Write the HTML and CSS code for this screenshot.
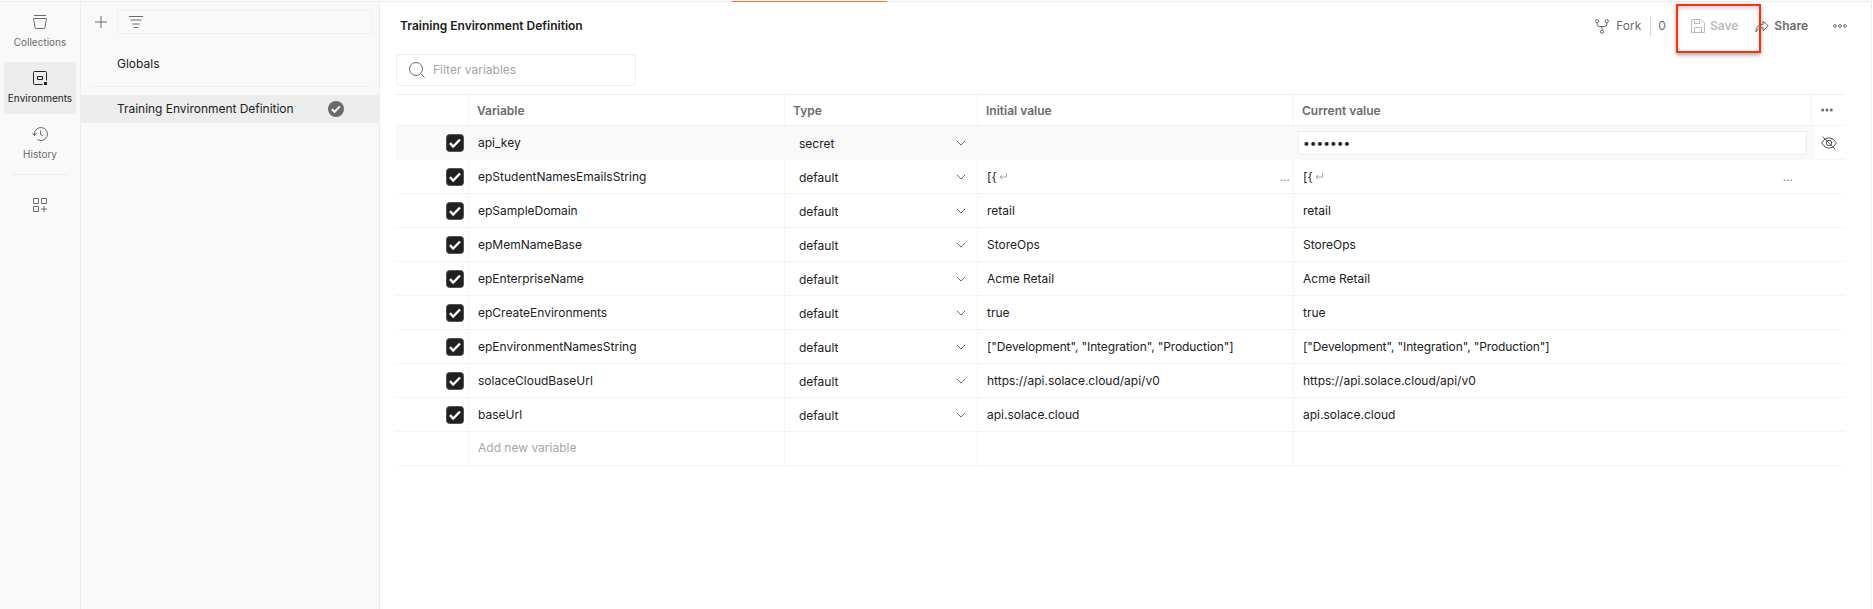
FILE: index.html
```html
<!DOCTYPE html>
<html lang="en">
<head>
<meta charset="utf-8">
<title>Training Environment Definition</title>
<link rel="stylesheet" href="styles.css">
</head>
<body>
<div class="app">
  <nav class="rail">
    <div class="rail-item">
      <svg width="16" height="16" viewBox="0 0 16 16"><path d="M2 1.500h12M1.500 4.500h13l-1.600 9.200q-.1.800-.9.800H4q-.8 0-.9-.8z"/></svg>
      <span>Collections</span>
    </div>
    <div class="rail-item active">
      <svg width="16" height="16" viewBox="0 0 16 16"><path d="M14.500 10.500v-8q0-1-1-1h-11q-1 0-1 1v11q0 1 1 1h8M5.500 6.500h5v3h-5z"/><path class="solid" d="M12 12h3v3h-3z"/></svg>
      <span>Environments</span>
    </div>
    <div class="rail-item">
      <svg width="16" height="16" viewBox="0 0 16 16"><path d="M2.500 9.500V8a6.500 6.500 0 1 1 3 5.500M.5 7.300l2 2.200 2-2.200M8.500 4.500V8.500l2.500 1.500"/></svg>
      <span>History</span>
    </div>
    <hr>
    <svg class="more" width="16" height="16" viewBox="0 0 16 16"><path d="M1.500 1.500h5v5h-5zM9.500 1.500h5v5h-5zM1.500 9.500h5v5h-5zM12 9v6M9 12h6"/></svg>
  </nav>
  <aside class="sidebar">
    <div class="side-tools">
      <svg class="plus" width="12" height="12" viewBox="0 0 12 12"><path d="M6 0v12M0 6h12"/></svg>
      <div class="side-filter"><svg width="14" height="12" viewBox="0 0 14 12"><path d="M0 .500h14M1.500 4h11M3.500 8h7M5 11.500h4"/></svg></div>
    </div>
    <div class="env globals">Globals</div>
    <div class="env selected"><span>Training Environment Definition</span>
      <svg width="16" height="16" viewBox="0 0 16 16"><circle cx="8" cy="8" r="8"/><path d="M4 8.200l2.600 2.600L11.800 5.400"/></svg>
    </div>
  </aside>
  <main class="main">
    <div class="tab-line"></div>
    <header class="head">
      <h1>Training Environment Definition</h1>
      <div class="actions">
        <svg class="i-fork" width="14" height="15" viewBox="0 0 14 15"><circle cx="2.200" cy="2.200" r="1.600"/><circle cx="11.800" cy="2.200" r="1.600"/><circle cx="7" cy="12.800" r="1.600"/><path d="M2.200 3.800v1.700q0 2 2 2h5.600q2 0 2-2V3.800M7 7.500v3.700"/></svg>
        <span class="fork">Fork</span><span class="count">0</span>
        <div class="save"><svg width="14" height="14" viewBox="0 0 14 14"><path d="M.500.500h9.500l3.500 3.500v9.500H.500zM3.500.500v4h5v-4M3.500 13.500v-5h7v5"/></svg><span>Save</span><i class="callout"></i></div>
        <svg class="i-share" width="14" height="13" viewBox="0 0 14 13"><path d="M.8 12Q1 4.500 8 4.500V1.300L13.300 6 8 10.700V7.500Q3 7.500.8 12z"/></svg>
        <span class="share">Share</span>
        <svg class="i-dots" width="14" height="4" viewBox="0 0 14 4"><circle cx="2" cy="2" r="1.400"/><circle cx="7" cy="2" r="1.400"/><circle cx="12" cy="2" r="1.400"/></svg>
      </div>
    </header>
    <div class="search"><svg width="16" height="16" viewBox="0 0 16 16"><circle cx="7" cy="7" r="6.500"/><path d="M11.500 11.500L15.500 15.500"/></svg><span>Filter variables</span></div>
    <div class="table" id="table">
      <div class="row header"><div></div><div>Variable</div><div>Type</div><div>Initial value</div><div>Current value</div><div><svg class="hdots" width="12" height="4" viewBox="0 0 12 4"><circle cx="1.700" cy="2" r="1.500"/><circle cx="6" cy="2" r="1.500"/><circle cx="10.300" cy="2" r="1.500"/></svg></div></div>
    </div>
  </main>
</div>
<script src="app.js"></script>
</body>
</html>
```
FILE: app.js
```js
const list = '["Development", "Integration", "Production"]';
const rows = [
  ['api_key', 'secret', '', '•••••••'],
  ['epStudentNamesEmailsString', 'default', '[{', '[{'],
  ['epSampleDomain', 'default', 'retail', 'retail'],
  ['epMemNameBase', 'default', 'StoreOps', 'StoreOps'],
  ['epEnterpriseName', 'default', 'Acme Retail', 'Acme Retail'],
  ['epCreateEnvironments', 'default', 'true', 'true'],
  ['epEnvironmentNamesString', 'default', list, list],
  ['solaceCloudBaseUrl', 'default', 'https://api.solace.cloud/api/v0', 'https://api.solace.cloud/api/v0'],
  ['baseUrl', 'default', 'api.solace.cloud', 'api.solace.cloud'],
];
const check = '<svg class="check" width="18" height="18" viewBox="0 0 18 18"><rect x=".5" y=".5" width="17" height="17" rx="3"/><path d="M4 9.200l3.200 3.300L14 5.500"/></svg>';
const chevron = '<svg class="chevron" width="10" height="6" viewBox="0 0 10 6"><path d="M.8.800L5 5 9.200.800"/></svg>';
const ret = '<svg class="return" width="8" height="7" viewBox="0 0 8 7"><path d="M7.500 0v4H1M3 2L1 4l2 2"/></svg>';
const eye = '<svg class="eye" width="16" height="14" viewBox="0 0 16 14"><path d="M.6 7Q3.500 1.700 8 1.700T15.400 7Q12.500 12.300 8 12.300T.6 7zM1.500.600l12.600 12.600"/><circle cx="8" cy="7" r="2.700"/></svg>';
const value = (v) => v === '[{'
  ? `<span>[{</span>${ret}<span class="ellipsis">...</span>`
  : `<span${v === list ? ' class="list"' : ''}>${v}</span>`;
const html = rows.map(([name, type, initial, current], i) => i === 0
  ? `<div class="row secret"><div>${check}</div><div>${name}</div><div class="type"><span>${type}</span>${chevron}</div><div></div><div class="masked"><div class="mask-box">${current}</div></div><div class="reveal">${eye}</div></div>`
  : `<div class="row"><div>${check}</div><div>${name}</div><div class="type"><span>${type}</span>${chevron}</div><div>${value(initial)}</div><div>${value(current)}</div><div></div></div>`).join('');
document.getElementById('table').insertAdjacentHTML('beforeend',
  html + '<div class="row add"><div></div><div>Add new variable</div><div></div><div></div><div></div><div></div></div>');
```
FILE: styles.css
```css
* { box-sizing: border-box; }
body { margin: 0; font: 12px/16px Inter, sans-serif; color: #212121; background: #fff; overflow: hidden; }
svg { display: block; flex: none; fill: none; stroke: #6b6b6b; stroke-width: 1; }
.app { display: flex; width: 1873px; height: 609px; border-top: 1px solid #fafafa; }
.rail { width: 81px; border-right: 1px solid #ededed; border-top: 1px solid #ededed; background: #f9f9f9; padding: 4px 4px 0; display: flex; flex-direction: column; align-items: center; }
.rail-item { width: 72px; height: 52px; margin-bottom: 4px; padding-top: 8px; display: flex; flex-direction: column; align-items: center; gap: 4px; border-radius: 4px; font-size: 10px; color: #6b6b6b; white-space: nowrap; }
.rail-item.active { background: #ededed; color: #212121; }
.rail-item.active svg { stroke: #212121; }
.rail-item .solid { fill: #212121; stroke: none; }
.rail hr { width: 56px; height: 1px; border: 0; background: #ededed; margin: 0; }
.more { margin-top: 22px; }
.sidebar { width: 299px; border-right: 1px solid #ededed; border-top: 1px solid #ededed; background: #f9f9f9; }
.side-tools { display: flex; align-items: center; padding: 8px 7px 0 14px; height: 32px; gap: 10px; }
.side-filter { flex: 1; height: 24px; border: 1px solid #f0f0f0; display: flex; align-items: center; padding-left: 11px; }
.globals { margin: 0 7px 0 8px; height: 53px; padding: 22px 0 0 28px; border-bottom: 1px solid #f0f0f0; }
.selected { margin-top: 8px; height: 28px; background: #ededed; padding: 0 35px 0 36px; display: flex; align-items: center; justify-content: space-between; letter-spacing: -.03px; }
.selected circle { fill: #6b6b6b; stroke: none; }
.selected path { stroke: #fff; stroke-width: 2; }
.main { flex: 1; border-top: 1px solid #ededed; border-right: 1px solid #ededed; margin-right: 1px; padding-left: 16px; position: relative; }
.tab-line { position: absolute; left: 352px; top: -1px; width: 155px; height: 1px; background: #ff6c37; }
.head { height: 52px; padding: 16px 24px 0 4px; display: flex; justify-content: space-between; }
h1 { margin: 0; font-size: 12px; line-height: 16px; font-weight: 600; }
.actions { display: flex; align-items: center; height: 16px; color: #6b6b6b; }
.fork { margin-left: 7px; }
.count { margin-left: 9px; border-left: 1px solid #d0d0d0; height: 20px; line-height: 20px; padding-left: 7px; }
.save { position: relative; display: flex; align-items: center; gap: 5px; margin-left: 25px; color: #bcbcbc; font-weight: 600; }
.save svg { stroke: #bcbcbc; }
.callout { position: absolute; left: -15px; top: -14px; width: 85px; height: 49px; border: 2px solid #ff2f0e; box-shadow: 0 2px 4px rgba(0,0,0,.35), inset 0 2px 4px rgba(0,0,0,.2); }
.i-share { margin-left: 17px; }
.share { margin-left: 5px; font-weight: 600; }
.i-dots { margin-left: 25px; }
.search { width: 240px; height: 32px; border: 1px solid #ededed; border-radius: 4px; display: flex; align-items: center; padding-left: 12px; gap: 8px; color: #a6a6a6; }
.table { width: 1448px; margin-top: 8px; border-top: 1px solid #ededed; }
.row { display: grid; grid-template-columns: 73px 316px 193px 316px 517px 33px; height: 34px; }
.row > div { display: flex; align-items: center; border-right: 1px solid #f5f5f5; border-bottom: 1px solid #f5f5f5; padding-left: 9px; }
.row > div:last-child, .row > div:nth-child(5) { border-right: 0; }
.row.header { height: 31px; font-weight: 600; color: #6b6b6b; }
.row.header > div { padding-left: 8px; padding-top: 1px; }
.row.header > div:last-child { padding-left: 10px; padding-top: 0; }
.row.header > div:nth-child(5) { border-right: 1px solid #f5f5f5; }
.hdots circle { fill: #6b6b6b; stroke: none; }
.row > div:first-child { padding-left: 50px; }
.check rect { fill: #212121; stroke: #555; }
.check path { stroke: #fff; stroke-width: 2.4; }
.row > .type { padding: 2px 11px 0 14px; justify-content: space-between; }
.chevron { margin-bottom: 2px; }
.row.secret > div { background: #f9f9f9; border-color: #f9f9f9; }
.row > .masked { padding: 0 0 0 4px; }
.mask-box { width: 509px; height: 24px; border: 1px solid #ededed; background: #fff; padding-left: 4px; line-height: 22px; }
.row.secret > .reveal { background: #fff; border-left: 4px solid #f9f9f9; border-bottom-color: #f5f5f5; padding-left: 6px; }
.eye { stroke: #555; }
.list { letter-spacing: -.11px; }
.return { margin-left: 2px; stroke: #a6a6a6; }
.ellipsis { margin-left: auto; margin-right: 3px; color: #8a8a8a; }
.row > div:nth-child(5) .ellipsis { margin-right: 18px; }
.add { color: #a6a6a6; }
.row.add > div { padding-bottom: 2px; }
```
